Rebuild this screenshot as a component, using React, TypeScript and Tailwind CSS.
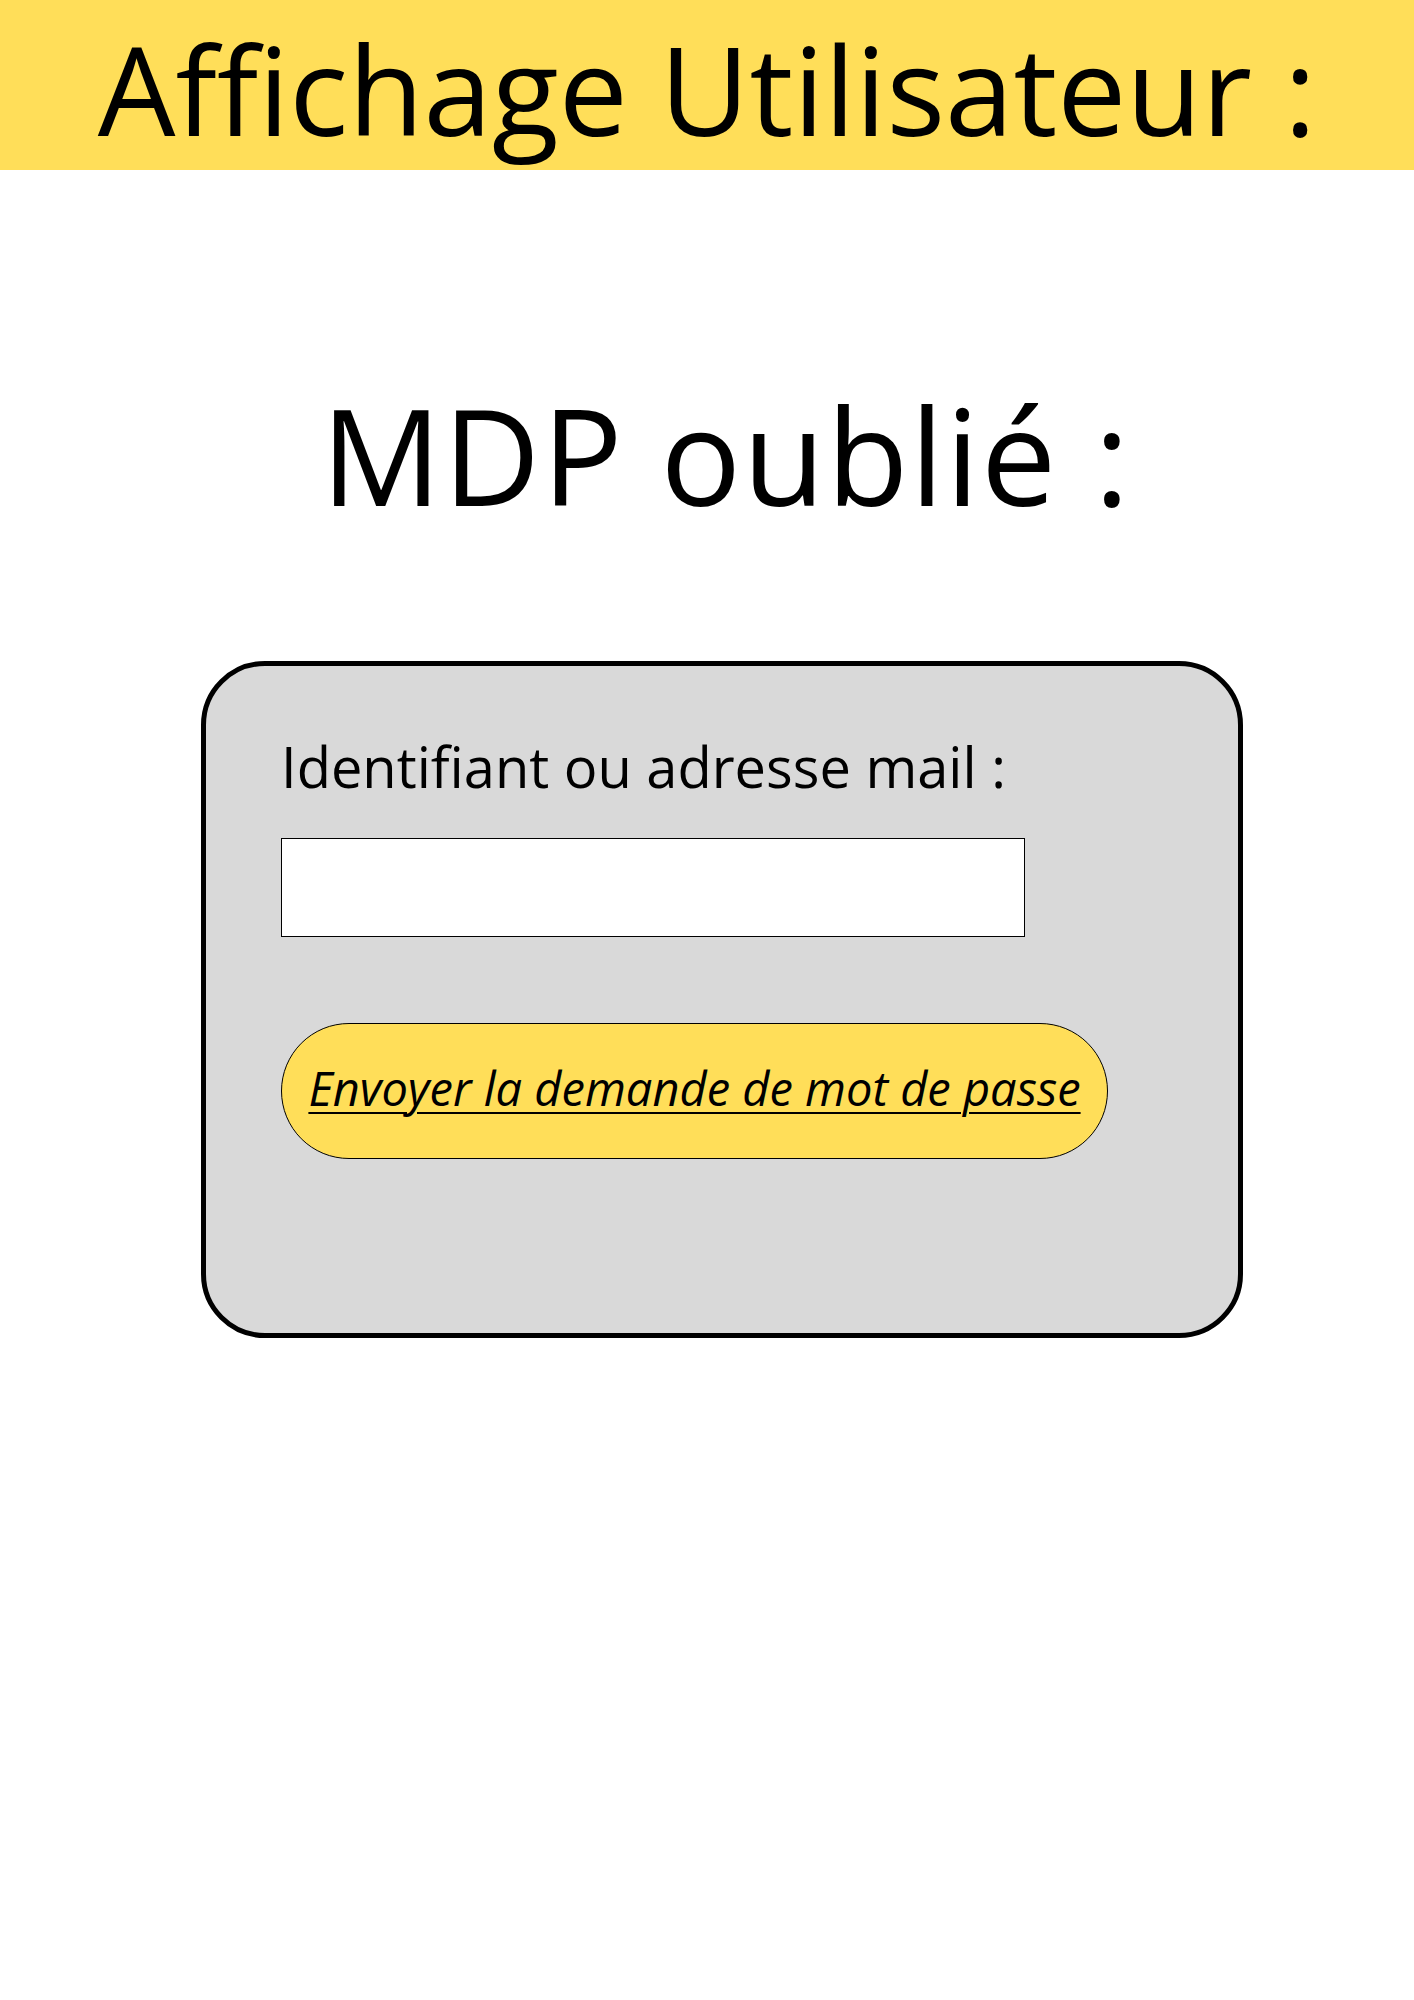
import { FC } from "react";

const Header: FC = () => {
	return (
		<div className="flex h-[170px] w-full items-center justify-center bg-[#ffde59]">
			<h1 className="mt-[8px] text-[123px] leading-[160px] text-black">
				Affichage Utilisateur :
			</h1>
		</div>
	);
};

const ForgotCard: FC = () => {
	return (
		<div className="ml-[201px] mt-[140px] h-[677px] w-[1042px] rounded-[64px] border-[5px] border-black bg-[#d9d9d9] pl-[75px] pt-[72px]">
			<label className="block text-[56px] leading-none text-black">
				Identifiant ou adresse mail :
			</label>
			<input
				type="text"
				className="mt-[44px] block h-[99px] w-[744px] border border-black bg-white outline-none"
			/>
			<button className="mt-[86px] flex h-[136px] w-[827px] items-center justify-center rounded-full border border-black bg-[#ffde59]">
				<span className="mt-[-6px] text-[47px] italic leading-none text-black underline decoration-2 underline-offset-[6px]">
					Envoyer la demande de mot de passe
				</span>
			</button>
		</div>
	);
};

const App: FC = () => {
	return (
		<div className="min-h-[2000px] w-full bg-white font-['Open_Sans',sans-serif]">
			<Header />
			<div className="mt-[217px] pl-[38px] text-center text-[134px] leading-none tracking-[0.012em] text-black">
				MDP oublié :
			</div>
			<ForgotCard />
		</div>
	);
};

export default App;
